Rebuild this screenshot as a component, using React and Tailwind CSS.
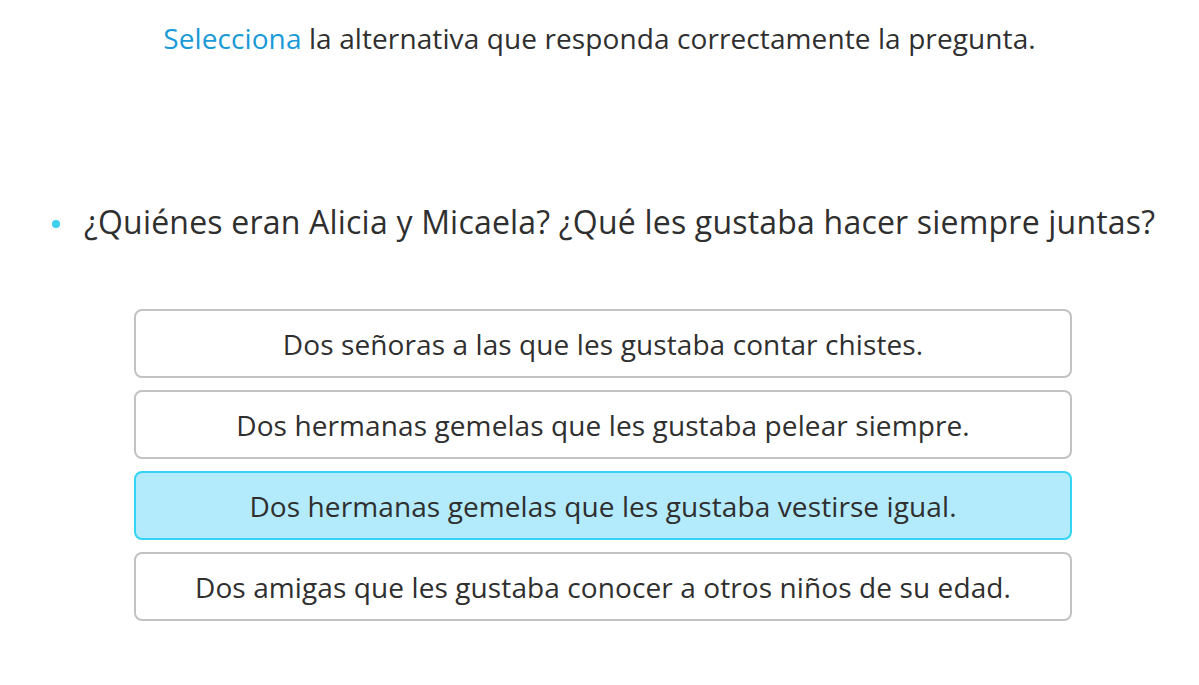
export default function App() {
  const opts = [
    "Dos señoras a las que les gustaba contar chistes.",
    "Dos hermanas gemelas que les gustaba pelear siempre.",
    "Dos hermanas gemelas que les gustaba vestirse igual.",
    "Dos amigas que les gustaba conocer a otros niños de su edad.",
  ];
  return (
    <div className="w-[1199px] h-[685px] bg-white text-[#2f2f2f]" style={{ fontFamily: '"Open Sans", "Noto Sans", sans-serif' }}>
      <div className="pt-[20px] text-center text-[28px] leading-[36px] tracking-[0.1px]">
        <span className="text-[#1a9ad7]">Selecciona</span> la alternativa que responda correctamente la pregunta.
      </div>
      <div className="mt-[146px] flex items-center pl-[52px]">
        <span className="w-[8px] h-[8px] rounded-full bg-[#3ccff0] mr-[24px] mt-[4px] shrink-0"></span>
        <span className="text-[32px] leading-[40px] whitespace-nowrap tracking-[0.2px]">¿Quiénes eran Alicia y Micaela? ¿Qué les gustaba hacer siempre juntas?</span>
      </div>
      <div className="mt-[67px] ml-[134px] w-[938px] flex flex-col gap-[12px]">
        {opts.map((o, i) => (
          <div
            key={i}
            className={
              "h-[69px] rounded-[8px] border-2 flex items-center justify-center text-[28px] tracking-[0.1px] " +
              (i === 2 ? "bg-[#b3ebfd] border-[#33d4f5]" : "bg-white border-[#c2c2c2]")
            }
          >
            {o}
          </div>
        ))}
      </div>
    </div>
  );
}
